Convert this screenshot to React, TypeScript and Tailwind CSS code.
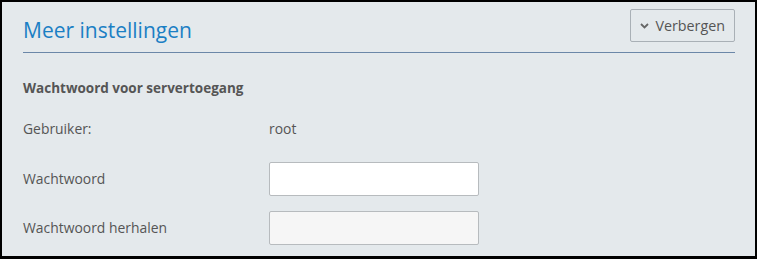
import React from 'react';

const Row: React.FC<{ label: string; children: React.ReactNode; className?: string }> = ({ label, children, className }) => (
  <div className={`flex items-center ${className ?? ''}`}>
    <div className="w-[246px] shrink-0">{label}</div>
    {children}
  </div>
);

export default function App() {
  return (
    <div
      className="w-[757px] h-[259px] bg-[#e4e9ec] border-black border-l-2 border-t-2 border-r-2 border-b-[3px] text-[13.9px] leading-[20px] text-[#555] overflow-hidden"
      style={{ fontFamily: '"Open Sans", "Noto Sans", sans-serif' }}
    >
      <div className="pl-[21px] pr-[20px]">
        <div className="flex items-center justify-between h-[51px] border-b border-[#6b87a8]">
          <h2 className="text-[21px] text-[#1b7fc4] leading-none mt-[6px]">Meer instellingen</h2>
          <button className="self-start flex items-center gap-[6px] h-[33px] px-[9px] mt-[7px] border border-[#a9b0b6] rounded-[2px] text-[14.3px] text-[#555]">
            <svg width="9" height="6" viewBox="0 0 9 6" fill="none">
              <path d="M1 1l3.5 3.5L8 1" stroke="#666" strokeWidth="1.8" />
            </svg>
            Verbergen
          </button>
        </div>
        <div className="font-bold text-[13.5px] mt-[25px]">Wachtwoord voor servertoegang</div>
        <Row label="Gebruiker:" className="mt-[21px]">
          <span>root</span>
        </Row>
        <Row label="Wachtwoord" className="mt-[23px]">
          <input type="password" className="w-[210px] h-[34px] bg-white border border-[#b7bbbe] rounded-[2px] outline-none" />
        </Row>
        <Row label="Wachtwoord herhalen" className="mt-[15px]">
          <input type="password" className="w-[210px] h-[34px] bg-[#f6f6f6] border border-[#b7bbbe] rounded-[2px] outline-none" />
        </Row>
      </div>
    </div>
  );
}
